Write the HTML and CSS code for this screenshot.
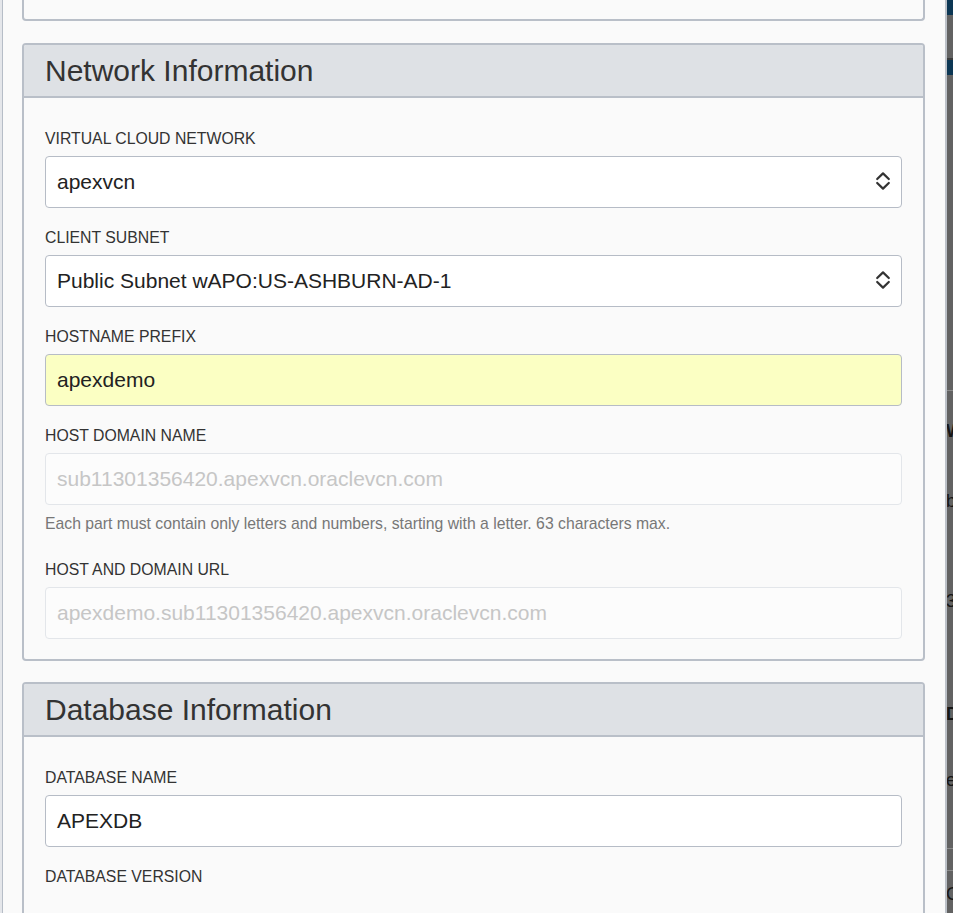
FILE: index.html
```html
<!DOCTYPE html>
<html>
<head>
<meta charset="utf-8">
<link rel="stylesheet" href="styles.css">
</head>
<body>
<div class="page">
  <div class="edge-left"></div>
  <main class="main">
    <div class="card stub"></div>

    <section class="card card-net">
      <header class="card-head"><h2>Network Information</h2></header>
      <div class="card-body">
        <div class="field">
          <label class="lbl">VIRTUAL CLOUD NETWORK</label>
          <div class="input select"><span>apexvcn</span>
            <svg class="chev" width="16" height="20" viewBox="0 0 16 20"><path d="M2.2 8 L8 2.4 L13.8 8" fill="none" stroke="#333" stroke-width="2.2" stroke-linecap="round" stroke-linejoin="round"/><path d="M2.2 12 L8 17.6 L13.8 12" fill="none" stroke="#333" stroke-width="2.2" stroke-linecap="round" stroke-linejoin="round"/></svg>
          </div>
        </div>
        <div class="field">
          <label class="lbl">CLIENT SUBNET</label>
          <div class="input select"><span>Public Subnet wAPO:US-ASHBURN-AD-1</span>
            <svg class="chev" width="16" height="20" viewBox="0 0 16 20"><path d="M2.2 8 L8 2.4 L13.8 8" fill="none" stroke="#333" stroke-width="2.2" stroke-linecap="round" stroke-linejoin="round"/><path d="M2.2 12 L8 17.6 L13.8 12" fill="none" stroke="#333" stroke-width="2.2" stroke-linecap="round" stroke-linejoin="round"/></svg>
          </div>
        </div>
        <div class="field">
          <label class="lbl">HOSTNAME PREFIX</label>
          <div class="input autofill"><span>apexdemo</span></div>
        </div>
        <div class="field field-help">
          <label class="lbl">HOST DOMAIN NAME</label>
          <div class="input disabled"><span>sub11301356420.apexvcn.oraclevcn.com</span></div>
          <p class="help">Each part must contain only letters and numbers, starting with a letter. 63 characters max.</p>
        </div>
        <div class="field last">
          <label class="lbl">HOST AND DOMAIN URL</label>
          <div class="input disabled"><span>apexdemo.sub11301356420.apexvcn.oraclevcn.com</span></div>
        </div>
      </div>
    </section>

    <section class="card card-db">
      <header class="card-head"><h2>Database Information</h2></header>
      <div class="card-body">
        <div class="field">
          <label class="lbl">DATABASE NAME</label>
          <div class="input"><span>APEXDB</span></div>
        </div>
        <div class="field">
          <label class="lbl">DATABASE VERSION</label>
        </div>
      </div>
    </section>
  </main>
  <aside class="strip">
    <div class="s-navy"></div>
    <div class="s-gap43"></div>
    <div class="s-dark"></div>
    <div class="s-navy"></div>
    <div class="s-gap315"></div>
    <div class="s-line"></div>
    <div class="s-gap29"></div>
    <div class="s-txt bold">W</div>
    <div class="s-gap48"></div>
    <div class="s-txt">b</div>
    <div class="s-gap78"></div>
    <div class="s-txt">3</div>
    <div class="s-gap91"></div>
    <div class="s-txt bold">D</div>
    <div class="s-gap44"></div>
    <div class="s-txt">e</div>
    <div class="s-gap57"></div>
    <div class="s-line"></div>
    <div class="s-gap21"></div>
    <div class="s-line"></div>
    <div class="s-gap12"></div>
    <div class="s-txt">C</div>
  </aside>
</div>
</body>
</html>
```

FILE: styles.css
```css
* { box-sizing: border-box; }
html, body {
  margin: 0;
  padding: 0;
  height: 913px;
  overflow: hidden;
  background: #fafafa;
  font-family: "Liberation Sans", Arial, sans-serif;
  color: #333;
}
.page {
  display: flex;
  height: 913px;
}
.edge-left {
  width: 3px;
  flex: none;
  background: #e4e6ea;
  border-right: 1px solid #b6bdc7;
}
.main {
  flex: 1;
  padding: 0 20px 0 19px;
  background: #fafafa;
  overflow: hidden;
}
.card {
  border: 2px solid #b9bfc8;
  border-radius: 4px;
  background: #fafafa;
}
.stub {
  height: 21px;
  border-top: none;
  border-radius: 0 0 4px 4px;
  margin-bottom: 22px;
}
.card-net { margin-bottom: 21px; }
.card-head {
  height: 53px;
  background: #dee1e5;
  border-bottom: 2px solid #b9bfc8;
  padding: 0 21px;
  border-radius: 2px 2px 0 0;
}
.card-head h2 {
  margin: 0;
  font-weight: normal;
  font-size: 30px;
  line-height: 52px;
  color: #333;
}
.card-body {
  padding: 29px 21px 20px;
}
.field { margin-bottom: 18px; }
.field.last { margin-bottom: 0; }
.field-help { margin-bottom: 0; }
.lbl {
  display: block;
  font-size: 15.8px;
  line-height: 20px;
  padding-top: 2px;
  color: #333;
  margin-bottom: 7px;
}
.input {
  height: 52px;
  border: 1px solid #b6bcc6;
  border-radius: 4px;
  background: #fff;
  padding: 0 10px 0 11px;
  display: flex;
  align-items: center;
  font-size: 21px;
  color: #222;
}
.input span { flex: 1; white-space: nowrap; }
.select .chev { flex: none; margin-bottom: 3px; }
.autofill { background: #fbffc3; }
.disabled {
  background: #fcfcfc;
  border-color: #e3e6ea;
  color: #c6c6c6;
}
.help {
  margin: 10px 0 25px;
  font-size: 15.75px;
  line-height: 18px;
  color: #777;
}
.strip {
  width: 8px;
  flex: none;
  border-left: 2px solid #bcc1c8;
  background: #626262;
  overflow: hidden;
  display: flex;
  flex-direction: column;
}
.strip > div { flex: none; }
.s-navy { height: 15px; background: #0c3754; }
.s-dark { height: 2px; background: #3c3c3c; }
.s-line { height: 1px; background: #8a8a8a; }
.s-gap43 { height: 43px; }
.s-gap315 { height: 315px; }
.s-gap29 { height: 29px; }
.s-gap48 { height: 48px; }
.s-gap78 { height: 78px; }
.s-gap91 { height: 91px; }
.s-gap44 { height: 44px; }
.s-gap57 { height: 57px; }
.s-gap21 { height: 21px; }
.s-gap12 { height: 12px; }
.s-txt {
  height: 22px;
  font-size: 18px;
  line-height: 22px;
  color: #161616;
  margin-left: -1px;
  white-space: nowrap;
}
.s-txt.bold { font-weight: bold; }
```
